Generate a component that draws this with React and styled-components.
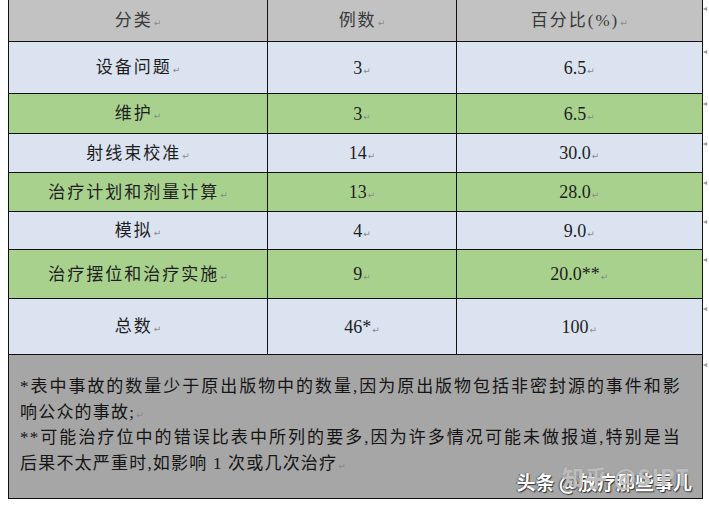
import styled, { createGlobalStyle } from 'styled-components';

const GlobalStyle = createGlobalStyle`
    html, body {
        margin: 0;
        padding: 0;
        background: #ffffff;
    }
    body {
        width: 709px;
        height: 507px;
        overflow: hidden;
        font-family: "Liberation Serif", "Noto Sans CJK SC", serif;
    }
`;

const rowColors = {
    head: '#c2c2c2',
    light: '#dbe2f0',
    green: '#a9d18e',
    note: '#a6a6a6'
};

const Page = styled.div`
    padding-left: 8px;
    margin-top: -2px;
`;

const Table = styled.table`
    border-collapse: collapse;
    table-layout: fixed;
`;

const Row = styled.tr`
    height: ${(p) => p.$h}px;
    background: ${(p) => rowColors[p.$tone]};
`;

const Cell = styled.td`
    border: 1.5px solid #111;
    padding: 0;
    text-align: center;
    vertical-align: middle;
    color: ${(p) => (p.$head ? '#3a3a3a' : '#1e1e1e')};
    font-size: ${(p) => (p.$num ? '18px' : '17px')};
    letter-spacing: ${(p) => (p.$num ? '0' : '2px')};
    line-height: 1;
`;

const EndMark = styled.td`
    width: 5px;
    padding: 0;
    background: #ffffff;
    vertical-align: top;
    color: #999;
    font-size: 8px;
    line-height: 1;
    padding-top: 6px;
`;

const Ret = styled.span`
    font-family: "DejaVu Sans", sans-serif;
    font-size: 9px;
    color: #8a8a8a;
    letter-spacing: 0;
    margin-left: 1px;
`;

const NoteCell = styled.td`
    border: 1.5px solid #111;
    background: ${rowColors.note};
    height: 144px;
    box-sizing: border-box;
    padding: 19px 21px 0 11px;
    position: relative;
    vertical-align: top;
    color: #151515;
    font-size: 17px;
    letter-spacing: 1.2px;
    text-align: left;
`;

const NoteLine = styled.div`
    height: 25.7px;
    line-height: 25.7px;
    overflow: visible;
    text-align: ${(p) => (p.$justify ? 'justify' : 'left')};
    text-align-last: ${(p) => (p.$justify ? 'justify' : 'left')};
    white-space: ${(p) => (p.$justify ? 'normal' : 'nowrap')};
`;

const Watermark = styled.div`
    position: absolute;
    right: 10px;
    bottom: 3px;
    font-family: "Noto Sans CJK SC", sans-serif;
    font-size: 19px;
    font-weight: 700;
    line-height: 26px;
    letter-spacing: 0;
    color: #ffffff;
    text-shadow: 1px 1px 1px #333, -1px 0 1px #555;
    white-space: nowrap;
`;

const Ghost = styled.span`
    position: absolute;
    right: 2px;
    bottom: 8px;
    font-size: 22px;
    line-height: 22px;
    color: rgba(255, 255, 255, 0.5);
    text-shadow: 0 0 1px #777;
    letter-spacing: 1px;
`;

const rows = [
    { name: '设备问题', n: '3', pct: '6.5', tone: 'light', h: 52 },
    { name: '维护', n: '3', pct: '6.5', tone: 'green', h: 40 },
    { name: '射线束校准', n: '14', pct: '30.0', tone: 'light', h: 39 },
    { name: '治疗计划和剂量计算', n: '13', pct: '28.0', tone: 'green', h: 39 },
    { name: '模拟', n: '4', pct: '9.0', tone: 'light', h: 38 },
    { name: '治疗摆位和治疗实施', n: '9', pct: '20.0**', tone: 'green', h: 49 },
    { name: '总数', n: '46*', pct: '100', tone: 'light', h: 56 }
];

function App() {
    return (
        <>
            <GlobalStyle />
            <Page>
                <Table>
                    <colgroup>
                        <col style={{ width: 260 }} />
                        <col style={{ width: 189 }} />
                        <col style={{ width: 247 }} />
                        <col style={{ width: 5 }} />
                    </colgroup>
                    <tbody>
                        <Row $tone='head' $h={43}>
                            <Cell $head>分类<Ret>↵</Ret></Cell>
                            <Cell $head>例数<Ret>↵</Ret></Cell>
                            <Cell $head>百分比(%)<Ret>↵</Ret></Cell>
                            <EndMark>◂</EndMark>
                        </Row>
                        {rows.map((r) => (
                            <Row key={r.name} $tone={r.tone} $h={r.h}>
                                <Cell>{r.name}<Ret>↵</Ret></Cell>
                                <Cell $num>{r.n}<Ret>↵</Ret></Cell>
                                <Cell $num>{r.pct}<Ret>↵</Ret></Cell>
                                <EndMark>◂</EndMark>
                            </Row>
                        ))}
                        <tr>
                            <NoteCell colSpan={3}>
                                <NoteLine $justify>*表中事故的数量少于原出版物中的数量,因为原出版物包括非密封源的事件和影</NoteLine>
                                <NoteLine>响公众的事故;<Ret>↵</Ret></NoteLine>
                                <NoteLine $justify>**可能治疗位中的错误比表中所列的要多,因为许多情况可能未做报道,特别是当</NoteLine>
                                <NoteLine>后果不太严重时,如影响 1 次或几次治疗<Ret>↵</Ret></NoteLine>
                                <Watermark>
                                    头条 @放疗那些事儿
                                    <Ghost>知乎 @SIPT</Ghost>
                                </Watermark>
                            </NoteCell>
                            <EndMark>◂</EndMark>
                        </tr>
                    </tbody>
                </Table>
            </Page>
        </>
    );
}

export default App;
